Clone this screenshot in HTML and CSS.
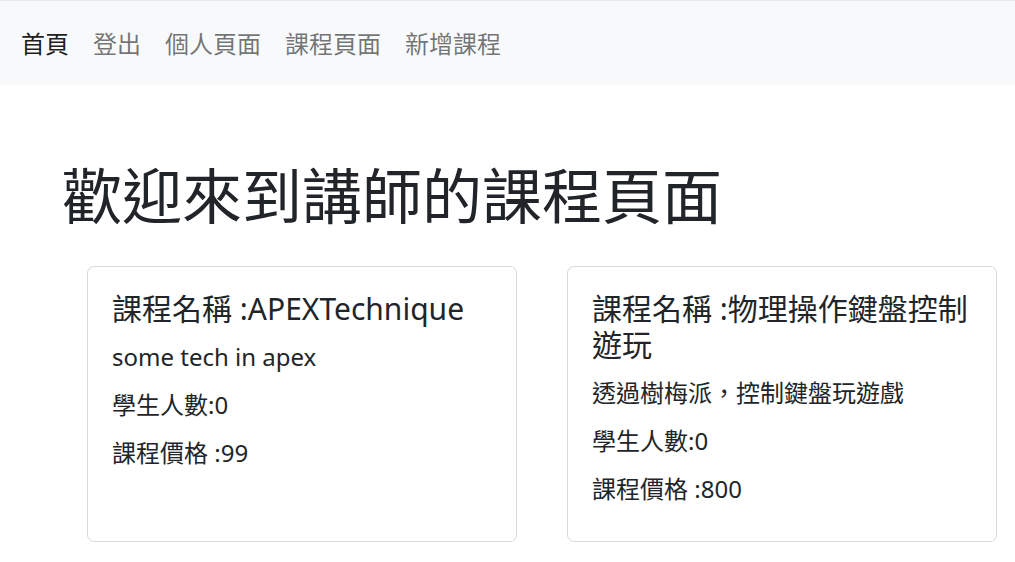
FILE: index.html
```html
<!DOCTYPE html>
<html lang="zh-Hant">
<head>
<meta charset="utf-8">
<title>講師課程頁面</title>
<link rel="stylesheet" href="styles.css">
</head>
<body>
<nav class="navbar">
  <ul class="nav-list">
    <li><a class="nav-link active" href="#">首頁</a></li>
    <li><a class="nav-link" href="#">登出</a></li>
    <li><a class="nav-link" href="#">個人頁面</a></li>
    <li><a class="nav-link" href="#">課程頁面</a></li>
    <li><a class="nav-link" href="#">新增課程</a></li>
  </ul>
</nav>
<main class="page">
  <h1 class="page-title">歡迎來到講師的課程頁面</h1>
  <div class="card-row">
    <div class="card">
      <h5 class="card-title">課程名稱 :APEXTechnique</h5>
      <p class="card-text">some tech in apex</p>
      <p class="card-text">學生人數:0</p>
      <p class="card-text">課程價格 :99</p>
    </div>
    <div class="card">
      <h5 class="card-title">課程名稱 :物理操作鍵盤控制遊玩</h5>
      <p class="card-text">透過樹梅派，控制鍵盤玩遊戲</p>
      <p class="card-text">學生人數:0</p>
      <p class="card-text">課程價格 :800</p>
    </div>
  </div>
</main>
</body>
</html>
```

FILE: styles.css
```css
* { box-sizing: border-box; }
html, body {
  margin: 0;
  padding: 0;
  background: #fff;
}
body {
  font-family: "Noto Sans", "Noto Sans CJK TC", sans-serif;
  font-size: 24px;
  line-height: 1.5;
  color: #212529;
  overflow: hidden;
}
.navbar {
  background: #f8f9fa;
  border-top: 1px solid #e6e7e9;
  padding: 12px 0 12px 9px;
}
.nav-list {
  list-style: none;
  margin: 0;
  padding: 0;
  display: flex;
}
.nav-link {
  display: block;
  padding: 12px;
  color: rgba(0, 0, 0, 0.55);
  text-decoration: none;
  line-height: 36px;
  font-family: "Noto Sans CJK TC", sans-serif;
}
.nav-link.active {
  color: rgba(0, 0, 0, 0.9);
}
.page {
  padding: 72px 0 0 62px;
}
.page-title {
  margin: 0 0 37px;
  font-size: 60px;
  font-weight: 400;
  line-height: 72px;
  font-family: "Noto Sans CJK TC", sans-serif;
}
.card-row {
  display: flex;
  gap: 50px;
  margin-left: 25px;
}
.card {
  width: 430px;
  border: 1px solid rgba(0, 0, 0, 0.15);
  border-radius: 7px;
  padding: 24px 24px 22px;
}
.card-title {
  margin: 0 0 12px;
  font-size: 30px;
  font-weight: 400;
  line-height: 36px;
}
.card-text {
  margin: 0 0 12px;
  line-height: 36px;
}
```
